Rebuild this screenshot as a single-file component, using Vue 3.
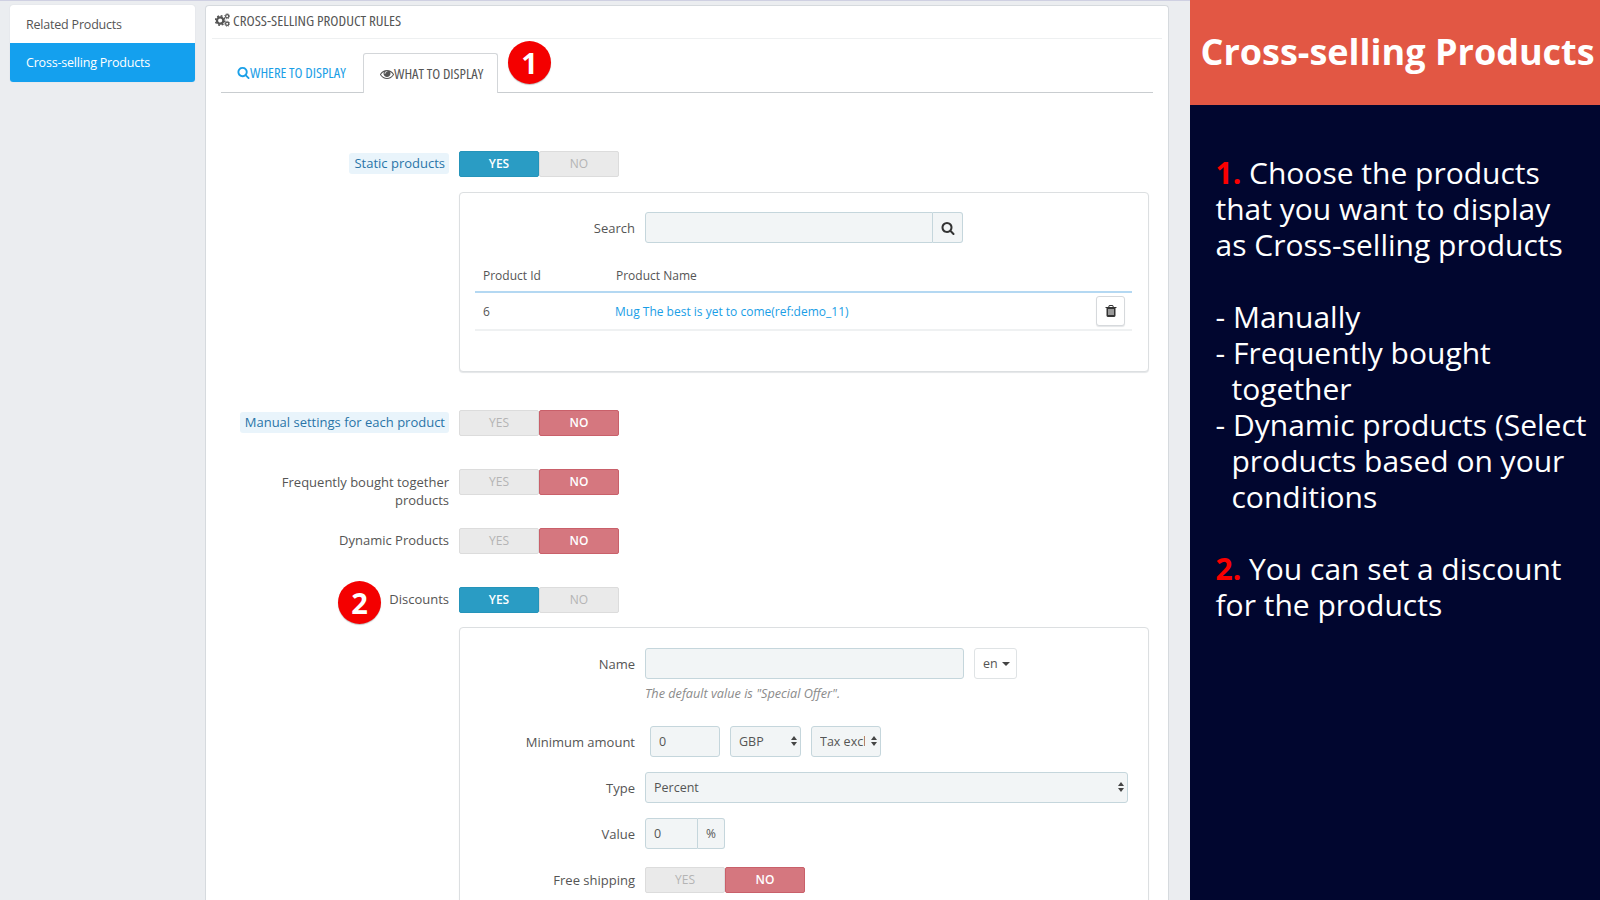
<script setup>
const search = 'M1216 832q0-185-131.500-316.500t-316.500-131.500-316.500 131.500-131.500 316.500 131.500 316.500 316.500 131.500 316.500-131.500 131.500-316.500zm512 832q0 52-38 90t-90 38q-54 0-90-38l-343-342q-179 124-399 124-143 0-273.500-55.500t-225-150-150-225-55.500-273.500 55.500-273.500 150-225 225-150 273.500-55.500 273.500 55.500 225 150 150 225 55.500 273.500q0 220-124 399l343 343q37 37 37 90z'
const trash = 'M704 1376v-704q0-14-9-23t-23-9h-64q-14 0-23 9t-9 23v704q0 14 9 23t23 9h64q14 0 23-9t9-23zm256 0v-704q0-14-9-23t-23-9h-64q-14 0-23 9t-9 23v704q0 14 9 23t23 9h64q14 0 23-9t9-23zm256 0v-704q0-14-9-23t-23-9h-64q-14 0-23 9t-9 23v704q0 14 9 23t23 9h64q14 0 23-9t9-23zm-544-992h448l-48-117q-7-9-17-11h-317q-10 2-17 11zm928 32v64q0 14-9 23t-23 9h-96v948q0 83-47 143.500t-113 60.500h-832q-66 0-113-58.500t-47-141.500v-952h-96q-14 0-23-9t-9-23v-64q0-14 9-23t23-9h309l70-167q15-37 54-63t79-26h320q40 0 79 26t54 63l70 167h309q14 0 23 9t9 23z'
const eye = 'M1664 960q-152-236-381-353 61 104 61 225 0 185-131.500 316.500t-316.500 131.500-316.500-131.500-131.500-316.500q0-121 61-225-229 117-381 353 133 205 333.500 326.500t434.500 121.500 434.500-121.500 333.500-326.500zm-720-384q0-20-14-34t-34-14q-125 0-214.500 89.500t-89.500 214.500q0 20 14 34t34 14 34-14 14-34q0-86 61-147t147-61q20 0 34-14t14-34zm848 384q0 34-20 69-140 230-376.500 368.500t-499.500 138.500-499.500-139-376.500-368q-20-35-20-69t20-69q140-229 376.500-368t499.500-139 499.500 139 376.500 368q20 35 20 69z'
</script>

<template>
  <div class="page">
    <div class="admin">
      <nav class="side">
        <div class="side-item">Related Products</div>
        <div class="side-item on">Cross-selling Products</div>
      </nav>
      <main class="panel">
        <header class="panel-head">
          <svg class="cogs" viewBox="0 0 16 14" aria-hidden="true">
            <circle cx="5.5" cy="7.5" r="3.4" fill="none" stroke="#555" stroke-width="2.4"/>
            <circle cx="5.5" cy="7.5" r="5" fill="none" stroke="#555" stroke-width="1.6" stroke-dasharray="2 1.93"/>
            <circle cx="13" cy="3" r="1.7" fill="none" stroke="#555" stroke-width="1.3"/>
            <circle cx="13" cy="3" r="2.7" fill="none" stroke="#555" stroke-width="1" stroke-dasharray="1 1.12"/>
            <circle cx="13" cy="11" r="1.7" fill="none" stroke="#555" stroke-width="1.3"/>
            <circle cx="13" cy="11" r="2.7" fill="none" stroke="#555" stroke-width="1" stroke-dasharray="1 1.12"/>
          </svg>
          <span class="cond head-text">CROSS-SELLING PRODUCT RULES</span>
        </header>

        <div class="tabs">
          <div class="tab link">
            <svg class="tab-ico" viewBox="0 0 1792 1792"><path :d="search" fill="#1aa0e8"/></svg><span class="cond">WHERE TO DISPLAY</span>
          </div>
          <div class="tab active">
            <svg class="tab-ico eye" viewBox="0 0 1792 1792"><path :d="eye" fill="#555"/></svg><span class="cond">WHAT TO DISPLAY</span>
          </div>
          <div class="badge badge-one">1</div>
        </div>

        <section class="form">
          <div class="row">
            <div class="lab"><span class="hint">Static products</span></div>
            <div class="toggle"><span class="yes-on">YES</span><span class="off">NO</span></div>
          </div>

          <div class="box box-search">
            <div class="in-row search-row">
              <label class="in-lab">Search</label>
              <div class="field search-field"></div>
              <div class="addon search-addon">
                <svg viewBox="0 0 1792 1792" width="14" height="14"><path :d="search" fill="#333"/></svg>
              </div>
            </div>
            <div class="tbl">
              <div class="thead"><span class="c1">Product Id</span><span>Product Name</span></div>
              <div class="trow">
                <span class="c1">6</span>
                <a class="plink">Mug The best is yet to come(ref:demo_11)</a>
                <div class="del">
                  <svg viewBox="0 0 1792 1792" width="14" height="14"><path :d="trash" fill="#333"/></svg>
                </div>
              </div>
            </div>
          </div>

          <div class="row r-manual">
            <div class="lab"><span class="hint">Manual settings for each product</span></div>
            <div class="toggle"><span class="off">YES</span><span class="no-on">NO</span></div>
          </div>
          <div class="row r-freq">
            <div class="lab two">Frequently bought together products</div>
            <div class="toggle"><span class="off">YES</span><span class="no-on">NO</span></div>
          </div>
          <div class="row r-dyn">
            <div class="lab">Dynamic Products</div>
            <div class="toggle"><span class="off">YES</span><span class="no-on">NO</span></div>
          </div>
          <div class="row r-disc">
            <div class="lab">
              <div class="badge badge-two">2</div>
              Discounts
            </div>
            <div class="toggle"><span class="yes-on">YES</span><span class="off">NO</span></div>
          </div>

          <div class="box box-disc">
            <div class="in-row">
              <label class="in-lab">Name</label>
              <div class="field name-field"></div>
              <div class="en">en<i class="caret"></i></div>
            </div>
            <p class="help">The default value is "Special Offer".</p>
            <div class="in-row r-min">
              <label class="in-lab">Minimum amount</label>
              <div class="field amount">0</div>
              <div class="field sel gbp">GBP<i class="arrows"></i></div>
              <div class="field sel tax"><span class="clip">Tax excl.</span><i class="arrows"></i></div>
            </div>
            <div class="in-row r-type">
              <label class="in-lab">Type</label>
              <div class="field sel type">Percent<i class="arrows"></i></div>
            </div>
            <div class="in-row r-val">
              <label class="in-lab">Value</label>
              <div class="field val">0</div>
              <div class="addon pct">%</div>
            </div>
            <div class="in-row r-ship">
              <label class="in-lab">Free shipping</label>
              <div class="toggle"><span class="off">YES</span><span class="no-on">NO</span></div>
            </div>
          </div>
        </section>
      </main>
    </div>

    <aside class="promo">
      <h1 class="promo-title">Cross-selling Products</h1>
      <div class="promo-body">
        <p><b>1.</b> Choose the products<br>that you want to display<br>as Cross-selling products</p>
        <p>- Manually<br>- Frequently bought<br><span class="ind">together</span><br>- Dynamic products (Select<br><span class="ind">products based on your</span><br><span class="ind">conditions</span></p>
        <p><b>2.</b> You can set a discount<br>for the products</p>
      </div>
    </aside>
  </div>
</template>

<style>
html, body { margin: 0; padding: 0; overflow: hidden; }
</style>

<style scoped>
.page {
  width: 1600px; height: 900px; display: flex; overflow: hidden;
  font-family: "Open Sans", sans-serif; color: #555; background: #ebedf0;
}
.admin {
  width: 1190px; flex: none; display: flex; align-items: flex-start; gap: 10px;
  padding: 5px 21px 0 10px; box-sizing: border-box; height: 900px;
  border-top: 1px solid #cfd0e2;
}
.side {
  width: 185px; flex: none; background: #fff; border-radius: 3px; overflow: hidden;
  box-shadow: 0 0 1px #c4c9cf; margin-top: -1px; font-size: 12.5px; letter-spacing: -.2px;
}
.side-item { height: 38px; line-height: 40px; padding-left: 16px; color: #555; }
.side-item.on { height: 39px; background: #14a0ee; color: #fff; font-weight: 500; }
.panel {
  flex: 1; height: 900px; background: #fff; border: 1px solid #d6dade; border-bottom: 0;
  border-radius: 4px 4px 0 0; margin-top: -1px; box-sizing: border-box; padding: 0 15px;
  position: relative;
}
.panel-head {
  margin: 0 -9px; padding: 0 0 5px 3px; box-sizing: content-box; display: flex; align-items: center; gap: 3px;
  height: 27px; border-bottom: 1px solid #eef0f1;
}
.cond {
  font-family: "Open Sans", sans-serif; font-stretch: 75%; font-size: 14.6px; white-space: nowrap; color: inherit;
  position: relative; top: -1px;
}
.head-text { font-size: 15px; top: 0; }
.cogs { width: 15px; height: 14px; flex: none; }
.tabs {
  margin-top: 14px; height: 39px; border-bottom: 1px solid #c9cdd0; display: flex; position: relative;
}
.tab { height: 39px; box-sizing: border-box; display: flex; align-items: center; padding: 0 15px 0 16px; flex: none; }
.tab.link { width: 142px; color: #1a9ee6; }
.tab.active {
  width: 135px; background: #fff; border: 1px solid #d3d6d9; border-bottom: 0; border-radius: 3px 3px 0 0;
  color: #555; height: 40px; padding-left: 16px;
}
.tab-ico { width: 13px; height: 13px; flex: none; }
.tab-ico.eye { width: 14px; height: 14px; }
.badge {
  width: 43px; height: 43px; border-radius: 50%; background: #f40000; color: #fff;
  font: 700 29px/43px "Open Sans", sans-serif; text-align: center; position: absolute;
  box-shadow: 0 1px 1px rgba(0,0,0,.25);
}
.badge-one { left: 287px; top: -12px; }
.badge-two { left: 117px; top: -6px; }
.form { padding-top: 58px; font-size: 13px; }
.row { display: flex; gap: 10px; align-items: flex-start; }
.lab {
  width: 228px; flex: none; text-align: right; line-height: 18px; padding-top: 3px; position: relative;
  box-sizing: border-box; color: #555; height: 26px;
}
.lab.two { height: 41px; padding-top: 4px; padding-left: 40px; }
.hint {
  background: #e9f4fb; color: #2a74a8; padding: 2px 4px 2px 5px; border-radius: 3px;
  display: inline-block; line-height: 17px; margin-top: -1px;
}
.toggle {
  width: 160px; height: 26px; display: flex; flex: none; font-size: 12px; font-weight: 600;
  line-height: 24px; text-align: center; box-sizing: border-box;
}
.toggle span { width: 80px; box-sizing: border-box; border: 1px solid; border-radius: 2px; }
.yes-on { background: #2a9cc4; border-color: #2594ba !important; color: #fff; }
.no-on { background: #d5777f; border-color: #c9606a !important; color: #fff; }
.off {
  background: #eaeaea; border-color: #dcdcdc !important; color: #b4b4b4; font-weight: 500;
}
.box {
  margin: 15px 0 0 238px; width: 690px; box-sizing: border-box; border: 1px solid #dcdfe1;
  border-radius: 4px; background: #fff; box-shadow: 0 1px 1px #e4e6e8;
}
.box-search { height: 180px; padding: 19px 16px 0 15px; }
.in-row { display: flex; align-items: center; position: relative; }
.in-lab { width: 160px; flex: none; text-align: right; }
.field {
  box-sizing: border-box; height: 31px; background: #f2f5f6; border: 1px solid #c5d6dc; border-radius: 3px;
  line-height: 29px; font-size: 12.5px; color: #555; flex: none;
}
.search-field { margin-left: 10px; width: 288px; border-radius: 3px 0 0 3px; }
.addon {
  box-sizing: border-box; height: 31px; background: #f2f5f6; border: 1px solid #c5d6dc; border-left: 0;
  border-radius: 0 3px 3px 0; display: flex; align-items: center; justify-content: center; flex: none;
}
.search-addon { width: 30px; }
.tbl { margin-top: 23px; }
.thead { display: flex; height: 25px; font-size: 12px; border-bottom: 2px solid #b4d8f2; padding-left: 8px; line-height: 20px; }
.c1 { width: 133px; flex: none; }
.trow { display: flex; align-items: center; height: 36px; border-bottom: 2px solid #eff1f2; padding-left: 8px; font-size: 12px; position: relative; }
.trow .c1 { width: 132px; }
.plink { color: #1a9ee6; }
.del {
  position: absolute; right: 7px; top: 3px; width: 29px; height: 30px; box-sizing: border-box;
  border: 1px solid #d6d9dc; border-radius: 3px; display: flex; align-items: center; justify-content: center;
  background: #fff; box-shadow: 0 1px 1px #e4e6e8;
}
.r-manual { margin-top: 38px; }
.r-freq { margin-top: 33px; }
.r-dyn { margin-top: 18px; }
.r-disc { margin-top: 33px; }
.box-disc { margin-top: 14px; height: 400px; padding: 20px 0 0 15px; }
.name-field { margin-left: 10px; width: 319px; }
.en {
  margin-left: 10px; width: 43px; height: 31px; box-sizing: border-box; border: 1px solid #dfe3e5; border-radius: 3px;
  font-size: 12.5px; display: flex; align-items: center; padding-left: 8px; gap: 4px; background: #fff;
}
.caret { width: 0; height: 0; border: 4px solid transparent; border-top-color: #444; border-bottom: 0; }
.help { margin: 6px 0 0 170px; font-size: 12.7px; font-style: italic; color: #8b8b8b; line-height: 16px; }
.r-min { margin-top: 25px; }
.sel { position: relative; padding-left: 8px; }
.amount { margin-left: 15px; width: 70px; padding-left: 8px; }
.gbp { margin-left: 10px; width: 71px; }
.tax { margin-left: 10px; width: 70px; }
.clip { display: block; width: 45px; overflow: hidden; white-space: nowrap; }
.arrows { position: absolute; right: 3px; top: 9px; width: 0; height: 0; border: 3px solid transparent; border-bottom: 4px solid #444; border-top: 0; }
.arrows::after { content: ""; position: absolute; left: -3px; top: 6px; border: 3px solid transparent; border-top: 4px solid #444; border-bottom: 0; }
.r-type { margin-top: 15px; }
.type { margin-left: 10px; width: 483px; }
.r-val { margin-top: 15px; }
.val { margin-left: 10px; width: 53px; padding-left: 8px; border-radius: 3px 0 0 3px; }
.pct { width: 27px; font-size: 12px; }
.r-ship { margin-top: 18px; }
.r-ship .toggle { margin-left: 10px; }
.promo { flex: 1; display: flex; flex-direction: column; background: #01062f; color: #fff; min-width: 0; }
.promo-title {
  margin: 0; height: 105px; background: #e25744; font: 700 36px/103px "Open Sans", sans-serif;
  padding-left: 10.5px; white-space: nowrap;
}
.promo-body { padding: 50px 0 0 25.5px; font-size: 30px; line-height: 36px; }
.promo-body p { margin: 0 0 36px; }
.promo-body b { color: #fa0000; font-weight: 700; }
.ind { padding-left: 16px; }
</style>
